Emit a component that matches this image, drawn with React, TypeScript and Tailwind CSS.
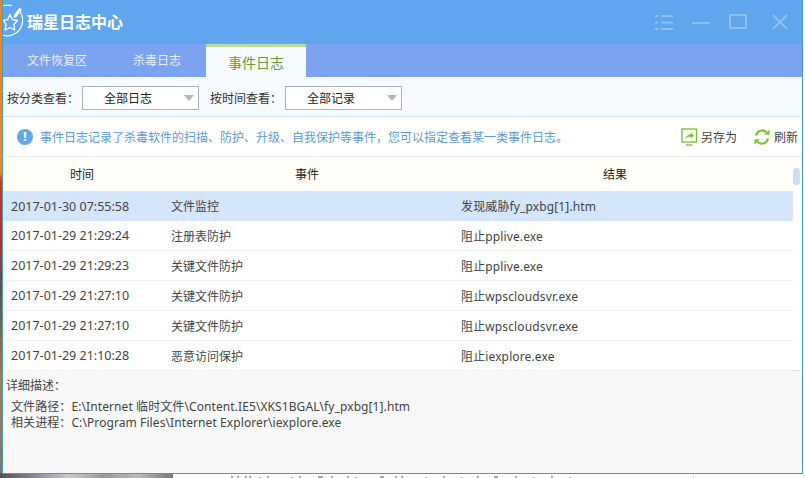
const FONT = "font-['Noto_Sans','Noto_Sans_CJK_SC',sans-serif]";

const rows = [
  { time: '2017-01-30 07:55:58', event: '文件监控', result: '发现威胁fy_pxbg[1].htm', active: true },
  { time: '2017-01-29 21:29:24', event: '注册表防护', result: '阻止pplive.exe' },
  { time: '2017-01-29 21:29:23', event: '关键文件防护', result: '阻止pplive.exe' },
  { time: '2017-01-29 21:27:10', event: '关键文件防护', result: '阻止wpscloudsvr.exe' },
  { time: '2017-01-29 21:27:10', event: '关键文件防护', result: '阻止wpscloudsvr.exe' },
  { time: '2017-01-29 21:10:28', event: '恶意访问保护', result: '阻止iexplore.exe' },
];

// ring is cut by the window's left edge in the picture
function Logo() {
  return (
    <svg width="24" height="44" viewBox="0 0 24 44" fill="none" stroke="white" className="shrink-0">
      <path d="M0 5.800A15.500 15.500 0 0 1 9 5.700" strokeWidth="1.200" />
      <path d="M17.300 12A15.500 15.500 0 0 1 0 35.200" strokeWidth="1.200" />
      <path
        d="M7 14.500L9.300 19.500L14.500 20.500L10.800 24.500L11.800 30L7 27.500L2 30L3 24.500L0.500 20.500L4.700 19.500Z"
        strokeWidth="1.300"
        strokeLinejoin="round"
      />
      <path d="M11 15L16.500 7.500L19 9.500L13.500 17L10.500 18Z" fill="white" stroke="none" />
    </svg>
  );
}

function Dropdown({ label }: { label: string }) {
  return (
    <div className="flex h-[24px] w-[117px] items-center border border-[#a9b3bb] bg-white">
      <span className="flex-1 pl-[21px] pt-[1px] text-[12px] text-[#222]">{label}</span>
      <span className="mr-[4px] h-0 w-0 border-x-[5px] border-t-[6px] border-x-transparent border-t-[#b5b5b5]" />
    </div>
  );
}

export default function App() {
  return (
    <div className={`${FONT} relative h-[478px] w-[805px] overflow-hidden bg-white`}>
      {/* desktop showing behind the window */}
      <div className="absolute inset-y-0 left-0 w-[2px] bg-[linear-gradient(180deg,#e8862c_0%,#e8862c_36%,#c8352c_38%,#b03030_50%,#555_60%,#a08050_80%,#777_100%)]" />
      <div className="absolute bottom-0 left-0 h-[5px] w-[173px] bg-[linear-gradient(90deg,#555,#889,#ccc,#999,#bbb,#777)]" />
      <svg width="344" height="3" viewBox="0 0 344 3" stroke="#555" className="absolute bottom-0 left-[230px]">
        <path d="M2 1v2M8 1v2M16 1v2M20 1v2M30 2v1M38 1v2M62 2v1M70 1v2M88 2h5M102 1v2M118 1v2M126 2v1M150 2h4M166 1v2M172 1v2M196 2v1M214 1v2M232 2v1M248 1v2M264 2h4M286 1v2M304 2v1M322 1v2M340 2v1" />
      </svg>
      <div className="absolute bottom-0 left-[693px] h-[4px] w-px bg-[#ddd]" />

      {/* window */}
      <div className="absolute left-[2px] top-0 flex h-[474px] w-[801px] flex-col border-x border-b border-[#3f9fb3] bg-[#f8f8f8]">
        <div className="flex h-[44px] shrink-0 items-center overflow-hidden bg-[#5fa6ee]">
          <Logo />
          <span className="text-[16px] font-bold text-white">瑞星日志中心</span>
          <div className="ml-auto mr-[14px] flex items-center text-[#8dc1f3]">
            <svg width="18" height="15" viewBox="0 0 18 15" stroke="currentColor" strokeWidth="2">
              <path d="M0 1h3M6 1h12M0 7.500h3M6 7.500h12M0 14h3M6 14h12" />
            </svg>
            <svg width="18" height="18" viewBox="0 0 18 18" stroke="currentColor" strokeWidth="2" className="ml-[19px]">
              <path d="M0 10h18" />
            </svg>
            <svg width="18" height="15" viewBox="0 0 18 15" fill="none" stroke="currentColor" strokeWidth="2" className="ml-[19px] mb-[2px]">
              <rect x="1" y="1" width="16" height="13" />
            </svg>
            <svg width="16" height="16" viewBox="0 0 16 16" stroke="currentColor" strokeWidth="2" className="ml-[25px]">
              <path d="M1 1l14 14M15 1L1 15" />
            </svg>
          </div>
        </div>

        <div className="flex h-[33px] shrink-0 bg-[#7ba3f0] pt-[1px] text-[12px] text-[#e4edfb]">
          <div className="flex w-[109px] items-center justify-center pr-[1px]">文件恢复区</div>
          <div className="flex w-[94px] items-center justify-center pr-[4px]">杀毒日志</div>
          <div className="mt-[-1px] flex w-[100px] items-center justify-center border-t-[3px] border-[#b6dca0] bg-[#f7faff] text-[14px] text-[#6a9a35]">
            事件日志
          </div>
        </div>

        <div className="flex h-[40px] shrink-0 items-center border-b border-[#d8e5f0] bg-[#f7faff] pl-[4px] pt-[3px] text-[12px] text-[#333]">
          <span className="w-[75px] pt-[2px]">按分类查看：</span>
          <Dropdown label="全部日志" />
          <span className="ml-[11px] w-[75px] pt-[2px]">按时间查看：</span>
          <Dropdown label="全部记录" />
        </div>

        <div className="flex h-[40px] shrink-0 items-center border-b border-[#eceeee] bg-white pl-[14px] pt-[1px] text-[12px]">
          <span className="flex h-[16px] w-[16px] items-center justify-center rounded-full bg-[#62a7ee] text-[12px] font-bold text-white">
            !
          </span>
          <span className="ml-[7px] pt-[2px] text-[#5b9bd5]">
            事件日志记录了杀毒软件的扫描、防护、升级、自我保护等事件，您可以指定查看某一类事件日志。
          </span>
          <div className="ml-auto mr-[4px] flex items-center text-[#444]">
            <svg width="17" height="18" viewBox="0 0 17 18" fill="none" stroke="#7cb82f" className="mr-[3px]">
              <rect x="1" y="1" width="14.500" height="13" strokeWidth="1.300" />
              <path d="M5 17h6" strokeWidth="1.300" />
              <path d="M4.500 11c.5-3 2.500-4.500 5-4.500V4.500L13 7.500l-3.500 3V8.500c-2 0-3.500 .8-5 2.500z" fill="#7cb82f" stroke="none" />
            </svg>
            <span className="pt-[2px]">另存为</span>
            <svg width="16" height="16" viewBox="0 0 16 16" fill="none" className="ml-[17px] mr-[4px]">
              <path d="M2 6.500A6.200 6.200 0 0 1 12.500 3.300" stroke="#7cc52e" strokeWidth="2.200" />
              <path d="M10 5.800h5.500V.5z" fill="#7cc52e" />
              <path d="M14 9.500A6.200 6.200 0 0 1 3.500 12.700" stroke="#7cc52e" strokeWidth="2.200" />
              <path d="M6 10.200H.5v5.300z" fill="#7cc52e" />
            </svg>
            <span className="pt-[2px]">刷新</span>
          </div>
        </div>

        <div className="flex h-[214px] shrink-0 border-b border-[#dfe3e5] bg-white">
          <div className="flex w-[790px] flex-col text-[12px] text-[#444]">
            <div className="flex h-[34px] shrink-0 items-center bg-[#fffef9] pt-[1px] text-[#222]">
              <div className="w-[160px] pl-[67px]">时间</div>
              <div className="w-[290px] pl-[132px]">事件</div>
              <div className="flex-1 pl-[150px]">结果</div>
            </div>
            {rows.map((row, i) => (
              <div
                key={i}
                className={`flex h-[30px] shrink-0 items-center pt-[2px] ${
                  row.active ? 'bg-[#d5e5fb]' : 'border-b border-[#f1f1f1] bg-white'
                }`}
              >
                <div className="w-[168px] pl-[8px] text-[12.500px]">{row.time}</div>
                <div className="w-[290px]">{row.event}</div>
                <div className="flex-1 tracking-[0.130px]">{row.result}</div>
              </div>
            ))}
          </div>
          <div className="flex-1">
            <div className="h-[34px] bg-[#fffef9] pt-[11px]">
              <div className="h-[17px] w-[7px] rounded-[3px] bg-[#cfdcf3]" />
            </div>
          </div>
        </div>

        <div className="flex-1 bg-[#f8f8f8] pl-[3px] pt-[7px] text-[12px] leading-[16px] text-[#444]">
          <div>详细描述：</div>
          <div className="pl-[5px] pt-[5px] tracking-[0.090px]">
            <div>文件路径：E:\Internet 临时文件\Content.IE5\XKS1BGAL\fy_pxbg[1].htm</div>
            <div>相关进程：C:\Program Files\Internet Explorer\iexplore.exe</div>
          </div>
        </div>
      </div>
    </div>
  );
}
